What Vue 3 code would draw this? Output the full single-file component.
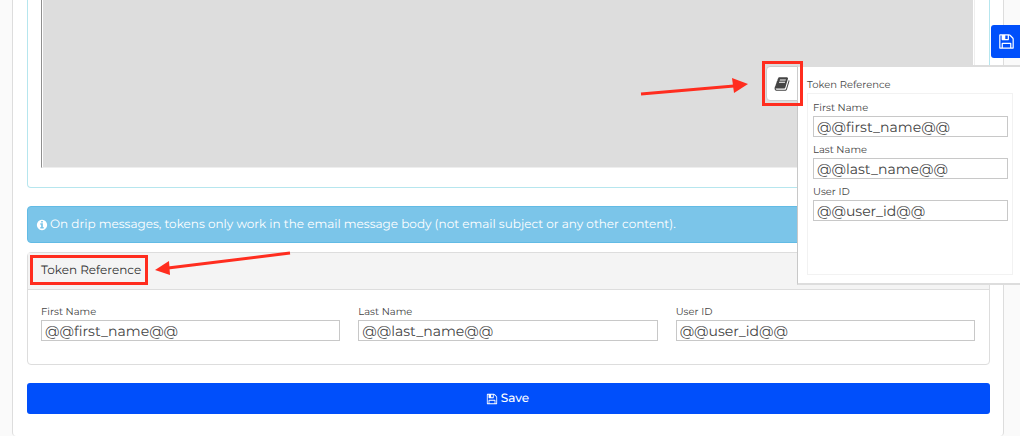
<script setup>
const tokens = [
  { id: 'first', label: 'First Name', value: '@@first_name@@' },
  { id: 'last', label: 'Last Name', value: '@@last_name@@' },
  { id: 'user', label: 'User ID', value: '@@user_id@@' },
]
const floppy =
  'M512 1536h768v-384h-768v384zm896 0h128v-896q0-14-10-38.5t-20-34.5l-281-281q-10-10-34-20t-39-10v416q0 40-28 68t-68 28h-576q-40 0-68-28t-28-68v-416h-128v1280h128v-416q0-40 28-68t68-28h832q40 0 68 28t28 68v416zm-384-928v-320q0-13-9.5-22.5t-22.5-9.5h-192q-13 0-22.5 9.5t-9.5 22.5v320q0 13 9.5 22.5t22.5 9.5h192q13 0 22.5-9.5t9.5-22.5zm640 32v928q0 40-28 68t-68 28h-1344q-40 0-68-28t-28-68v-1344q0-40 28-68t68-28h928q40 0 88 20t76 48l280 280q28 28 48 76t20 88z'
const info =
  'M1152 1376v-160q0-14-9-23t-23-9h-96v-512q0-14-9-23t-23-9h-320q-14 0-23 9t-9 23v160q0 14 9 23t23 9h96v320h-96q-14 0-23 9t-9 23v160q0 14 9 23t23 9h448q14 0 23-9t9-23zm-128-896v-160q0-14-9-23t-23-9h-192q-14 0-23 9t-9 23v160q0 14 9 23t23 9h192q14 0 23-9t9-23zm640 416q0 209-103 385.5t-279.5 279.5-385.5 103-385.5-103-279.5-279.5-103-385.5 103-385.5 279.5-279.5 385.5-103 385.5 103 279.5 279.5 103 385.5z'
const book =
  'M1703 478q40 57 18 129l-275 906q-19 64-76.5 107.5t-122.5 43.5h-923q-77 0-148.5-53.5t-99.5-131.5q-24-67-2-127 0-4 3-27t4-37q1-8-3-21.5t-3-19.5q2-11 8-21t16.5-23.5 16.5-23.5q23-38 45-91.5t30-91.5q3-10 .5-30t-.5-28q3-11 17-28t17-23q21-36 42-92t25-90q1-9-2.5-32t.5-28q4-13 22-30.5t22-22.5q19-26 42.5-84.5t27.5-96.5q1-8-3-25.5t-2-26.5q2-8 9-18t18-23 17-21q8-12 16.5-30.5t15-35 16-36 19.5-32 26.5-23.5 36-11.5 47.5 5.5l-1 3q38-9 51-9h761q74 0 114 56t18 130l-274 906q-36 119-71.5 153.5t-128.5 34.5h-869q-27 0-38 15-11 16-1 43 24 70 144 70h923q29 0 56-15.5t35-41.5l300-987q7-22 5-57 38 15 59 43zm-1064 2q-4 13 2 22.5t20 9.5h608q13 0 25.5-9.5t16.5-22.5l21-64q4-13-2-22.5t-20-9.5h-608q-13 0-25.5 9.5t-16.5 22.5zm-83 256q-4 13 2 22.5t20 9.5h608q13 0 25.5-9.5t16.5-22.5l21-64q4-13-2-22.5t-20-9.5h-608q-13 0-25.5 9.5t-16.5 22.5z'
</script>

<template>
  <div class="page">
    <main class="card">
      <section class="editor">
        <div class="canvas"></div>
      </section>

      <div class="alert" role="note">
        <svg class="icon" viewBox="0 0 1792 1792" aria-hidden="true"><path :d="info" /></svg>
        <span>On drip messages, tokens only work in the email message body (not email subject or any other content).</span>
      </div>

      <section class="panel">
        <h2 class="panel-title">Token Reference</h2>
        <div class="columns">
          <div v-for="t in tokens" :key="t.id" class="field">
            <label :for="'main-' + t.id">{{ t.label }}</label>
            <input :id="'main-' + t.id" type="text" :value="t.value" readonly />
          </div>
        </div>
      </section>

      <button class="save" type="button">
        <svg class="icon" viewBox="0 0 1792 1792" aria-hidden="true"><path :d="floppy" /></svg>
        <span>Save</span>
      </button>
    </main>

    <button class="quick-save" type="button" aria-label="Save">
      <svg viewBox="0 0 1792 1792" aria-hidden="true"><path :d="floppy" /></svg>
    </button>

    <aside class="drawer">
      <button class="drawer-tab" type="button" aria-label="Token Reference">
        <svg viewBox="0 0 1792 1792" aria-hidden="true"><path :d="book" /></svg>
      </button>
      <h3 class="drawer-title">Token Reference</h3>
      <div class="drawer-body">
        <div v-for="t in tokens" :key="t.id" class="field">
          <label :for="'side-' + t.id">{{ t.label }}</label>
          <input :id="'side-' + t.id" type="text" :value="t.value" readonly />
        </div>
      </div>
    </aside>

    <div class="mark mark-tab"></div>
    <div class="mark mark-title"></div>
    <svg class="arrow arrow-tab" viewBox="0 0 110 20" aria-hidden="true">
      <path class="shaft" d="M1 14 94 6" />
      <path class="head" d="M108 4 92 -2 94 13z" />
    </svg>
    <svg class="arrow arrow-title" viewBox="0 0 138 28" aria-hidden="true">
      <path class="shaft" d="M136 3 14 18" />
      <path class="head" d="M1 20 15 11 16 25z" />
    </svg>
  </div>
</template>

<style>
body {
  background: #fafafa;
}
</style>

<style scoped>
.page {
  position: relative;
  overflow: hidden;
  font-family: Montserrat, Inter, "Open Sans", "Liberation Sans", sans-serif;
  font-size: 12px;
  line-height: 18px;
  color: #444;
  text-rendering: geometricPrecision;
}
.page * {
  box-sizing: border-box;
}
.card {
  margin: 0 16px 0 12px;
  padding: 0 13px 22px 14px;
  background: #fff;
  border: 1px solid #ddd;
  border-width: 0 1px;
  border-radius: 0 0 4px 4px;
}
.editor {
  padding: 0 14px 19px 13px;
  border: 1px solid #b6e6ee;
  border-top: 0;
  border-radius: 0 0 4px 4px;
}
.canvas {
  height: 168px;
  padding: 0 1px;
  border: 1px solid #eee;
  border-top: 0;
  border-left-color: #8f8f8f;
  background: #ddd content-box;
}
.alert {
  display: flex;
  align-items: center;
  gap: 2px;
  margin-top: 18px;
  padding: 9px 8px 8px;
  min-height: 37px;
  color: #fff;
  background: #7bc5e9;
  border: 1px solid #62bbe5;
  border-radius: 4px;
}
.icon {
  width: 12px;
  height: 12px;
  fill: currentColor;
}
.panel {
  margin-top: 9px;
  border: 1px solid #ddd;
  border-radius: 4px;
}
.panel-title {
  margin: 0;
  padding: 9px 13px;
  font-size: 12px;
  font-weight: 400;
  color: #333;
  background: #f4f4f4;
  border-bottom: 1px solid #ddd;
}
.columns {
  display: grid;
  grid-template-columns: repeat(3, 1fr);
  gap: 18px;
  padding: 14px 14px 23px 13px;
}
.field {
  display: flex;
  flex-direction: column;
}
.field label {
  font-size: 10px;
  line-height: 16px;
}
.field input {
  width: 100%;
  height: 21px;
  padding: 0 3px;
  font-family: inherit;
  font-size: 14px;
  color: #444;
  background: #fff;
  border: 1px solid #c8c8c8;
  border-radius: 0;
  text-rendering: inherit;
}
.save {
  display: flex;
  align-items: center;
  justify-content: center;
  gap: 3px;
  width: 100%;
  height: 31px;
  margin-top: 18px;
  padding: 0 2px 0 0;
  font-family: inherit;
  font-size: 12px;
  font-weight: 500;
  color: #fff;
  background: #004ffb;
  border: 0;
  border-radius: 3px;
  text-rendering: inherit;
}
.quick-save {
  position: absolute;
  top: 25px;
  right: 0;
  width: 29px;
  height: 33px;
  padding: 0 0 0 2px;
  background: #004ffb;
  border: 0;
  border-radius: 3px 0 0 3px;
}
.quick-save svg {
  display: block;
  width: 17px;
  height: 17px;
  margin: auto;
  fill: #fff;
}
.drawer {
  position: absolute;
  top: 65px;
  right: 0;
  width: 223px;
  padding: 9px 7px 8px 9px;
  background: #fff;
  border: 0 solid #ddd;
  border-width: 2px 0 2px 1px;
  border-left-color: #c8c8c8;
}
.drawer-title {
  margin: 0;
  font-size: 10px;
  font-weight: 400;
  line-height: 17px;
}
.drawer-body {
  display: flex;
  flex-direction: column;
  gap: 5px;
  min-height: 182px;
  padding: 6px 4px 6px 5px;
  border: 1px solid #f2f2f2;
}
.drawer-tab {
  position: absolute;
  top: -1px;
  right: 100%;
  width: 32px;
  height: 35px;
  padding: 0;
  background: #fff;
  border: 1px solid #ccc;
  border-radius: 4px 0 0 4px;
}
.drawer-tab svg {
  display: block;
  width: 16px;
  height: 16px;
  margin: auto;
  fill: #444;
}
.mark {
  position: absolute;
  border: 3px solid #ff2d1f;
}
.mark-tab {
  top: 61px;
  right: 217px;
  width: 41px;
  height: 45px;
}
.mark-title {
  top: 255px;
  left: 30px;
  width: 118px;
  height: 30px;
}
.arrow {
  position: absolute;
  overflow: visible;
}
.arrow-tab {
  top: 80px;
  right: 270px;
  width: 110px;
  height: 20px;
}
.arrow-title {
  top: 250px;
  left: 154px;
  width: 138px;
  height: 28px;
}
.shaft {
  fill: none;
  stroke: #ff2d1f;
  stroke-width: 3;
}
.head {
  fill: #ff2d1f;
}
</style>
